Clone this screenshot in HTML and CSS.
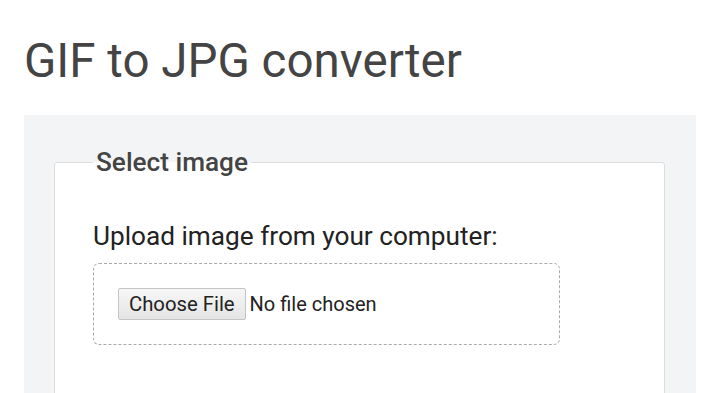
FILE: index.html
```html
<!DOCTYPE html>
<html>
<head>
<meta charset="utf-8">
<link rel="stylesheet" href="styles.css">
</head>
<body>
<div class="page">
  <h1 class="title">GIF to JPG converter</h1>
  <div class="panel">
    <fieldset class="box">
      <legend class="legend">Select image</legend>
      <label class="label" for="file">Upload image from your computer:</label>
      <div class="drop">
        <input class="file" id="file" type="file">
      </div>
    </fieldset>
  </div>
</div>
</body>
</html>
```
FILE: styles.css
```css
html, body {
  margin: 0;
  padding: 0;
  background: #fff;
  font-family: Roboto, "Liberation Sans", sans-serif;
}
.page {
  padding: 0 24px;
}
.title {
  margin: 0;
  padding-top: 33px;
  padding-left: 0;
  font-size: 47.5px;
  font-weight: 400;
  line-height: 56px;
  color: #444;
}
.panel {
  margin-top: 26px;
  background: #f3f4f6;
  padding: 32px 31px 40px 30px;
}
.box {
  margin: 0;
  background: #fff;
  border: 1px solid #dcdcdc;
  border-radius: 3px;
  padding: 44px 38px 60px 38px;
}
.legend {
  padding: 0 3px;
  font-size: 26.2px;
  font-weight: 500;
  line-height: 30px;
  color: #444;
}
.label {
  display: block;
  font-size: 26.2px;
  line-height: 30px;
  color: #222;
}
.drop {
  margin-top: 12px;
  width: 417px;
  border: 1px dashed #aaa;
  border-radius: 6px;
  padding: 24px 24px;
}
.file {
  display: block;
  font-family: Roboto, "Liberation Sans", sans-serif;
  font-size: 20px;
  color: #222;
  height: 32px;
}
.file::file-selector-button {
  font-family: Roboto, "Liberation Sans", sans-serif;
  font-size: 20.3px;
  color: #222;
  height: 32px;
  padding: 0 10px;
  margin: 0 4px 0 0;
  border: 1px solid #c4c4c4;
  border-radius: 2px;
  background: linear-gradient(#f7f7f7, #e4e4e4);
}
```
